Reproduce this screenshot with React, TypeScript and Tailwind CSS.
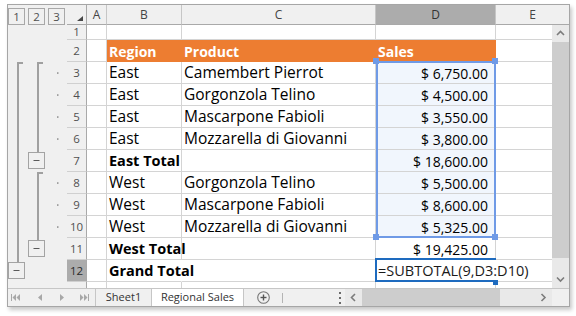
import React from "react";

type R = { n: number; h: string; b?: string; c?: string; d?: string; bold?: boolean };

const rows: R[] = [
  { n: 1, h: "h-[15px]" },
  { n: 2, h: "h-[22px]", b: "Region", c: "Product", d: "Sales" },
  { n: 3, h: "h-[22px]", b: "East", c: "Camembert Pierrot", d: "$ 6,750.00" },
  { n: 4, h: "h-[22px]", b: "East", c: "Gorgonzola Telino", d: "$ 4,500.00" },
  { n: 5, h: "h-[22px]", b: "East", c: "Mascarpone Fabioli", d: "$ 3,550.00" },
  { n: 6, h: "h-[22px]", b: "East", c: "Mozzarella di Giovanni", d: "$ 3,800.00" },
  { n: 7, h: "h-[22px]", b: "East Total", d: "$ 18,600.00", bold: true },
  { n: 8, h: "h-[22px]", b: "West", c: "Gorgonzola Telino", d: "$ 5,500.00" },
  { n: 9, h: "h-[22px]", b: "West", c: "Mascarpone Fabioli", d: "$ 8,600.00" },
  { n: 10, h: "h-[22px]", b: "West", c: "Mozzarella di Giovanni", d: "$ 5,325.00" },
  { n: 11, h: "h-[22px]", b: "West Total", d: "$ 19,425.00", bold: true },
  { n: 12, h: "h-[22px]", b: "Grand Total", bold: true },
  { n: 13, h: "h-[22px]" },
];

function GridRow({ r }: { r: R }) {
  const head = r.n === 2;
  const sel = r.n >= 3 && r.n <= 10;
  const grand = r.n === 12;
  const word = head
    ? "font-bold text-[14px] text-white"
    : r.bold
    ? "font-bold text-[14.5px] text-black"
    : "text-[15.5px] text-black";
  const fill = head ? "bg-[#ed7d31] border-[#ed7d31]" : "border-[#d4d4d4]";
  return (
    <div className={`flex ${r.h}`}>
      <div
        className={`w-[20px] shrink-0 flex items-center justify-center border-r border-b border-r-[#a9a9a9] border-b-[#d0d0d0] text-[11.5px] ${
          grand ? "bg-[#acacac] text-[#2b2b2b]" : "bg-[#f0f0f0] text-[#505050]"
        }`}
      >
        {r.n}
      </div>
      <div className="w-[20px] shrink-0 border-r border-b border-[#d4d4d4]" />
      <div
        className={`w-[75px] shrink-0 border-r border-b flex items-end pl-[2px] whitespace-nowrap ${fill} ${
          grand ? "border-r-transparent" : ""
        } ${word}`}
      >
        <span className="relative top-[1px]">{r.b}</span>
      </div>
      <div className={`w-[194px] shrink-0 border-r border-b flex items-end pl-[2px] whitespace-nowrap ${fill} ${word}`}>
        <span className="relative top-[1px]">{r.c}</span>
      </div>
      <div
        className={`w-[120px] shrink-0 border-r border-b flex items-end whitespace-nowrap ${
          head ? "justify-start pl-[2px]" : "justify-end pr-[7px] text-[14px] text-black"
        } ${fill} ${sel ? "bg-[#f1f6fd]" : ""} ${grand ? "border-r-transparent" : ""} ${head ? word : ""}`}
      >
        <span className="relative top-[1px]">{r.d}</span>
      </div>
      <div className="w-[56px] shrink-0 border-b border-[#d4d4d4]" />
    </div>
  );
}

function Outline() {
  const dots = [47.3, 69.3, 91.3, 113.3, 157.3, 179.3, 201.3];
  return (
    <svg width="59" height="263" viewBox="0 0 59 263">
      <rect x="9" y="37" width="2" height="200" fill="#a0a0a0" />
      <rect x="9" y="37" width="6" height="2" fill="#a0a0a0" />
      <rect x="29" y="37" width="2" height="90" fill="#a0a0a0" />
      <rect x="29" y="37" width="6" height="2" fill="#a0a0a0" />
      <rect x="29" y="147" width="2" height="68" fill="#a0a0a0" />
      <rect x="29" y="147" width="6" height="2" fill="#a0a0a0" />
      {dots.map((y) => (
        <rect key={y} x="49" y={y} width="1.5" height="1.5" fill="#8c8c8c" />
      ))}
      {[
        [20.5, 127.5],
        [20.5, 215.5],
        [0.5, 237.5],
      ].map(([x, y]) => (
        <g key={y}>
          <rect x={x} y={y} width="16" height="16" fill="#f0f0f0" stroke="#a3a3a3" />
          <line x1={x + 5} x2={x + 11} y1={y + 8} y2={y + 8} stroke="#5a5a5a" />
        </g>
      ))}
    </svg>
  );
}

function Chevron({ dir }: { dir: "up" | "down" | "left" | "right" }) {
  const pts = {
    up: "1,5 4.5,1.5 8,5",
    down: "1,1.5 4.5,5 8,1.5",
    left: "5,1 1.5,4.5 5,8",
    right: "1.5,1 5,4.5 1.5,8",
  }[dir];
  const v = dir === "up" || dir === "down";
  return (
    <svg width={v ? 9 : 7} height={v ? 7 : 9} viewBox={v ? "0 0 9 7" : "0 0 7 9"}>
      <polyline points={pts} fill="none" stroke="#7c7c7c" strokeWidth="1.6" />
    </svg>
  );
}

function Nav({ kind }: { kind: "first" | "prev" | "next" | "last" }) {
  const c = "#a8a8a8";
  if (kind === "prev")
    return (
      <svg width="4" height="7" viewBox="0 0 4 7">
        <polygon points="4,0 4,7 0,3.5" fill={c} />
      </svg>
    );
  if (kind === "next")
    return (
      <svg width="4" height="7" viewBox="0 0 4 7">
        <polygon points="0,0 0,7 4,3.5" fill={c} />
      </svg>
    );
  if (kind === "first")
    return (
      <svg width="9" height="7" viewBox="0 0 9 7">
        <rect x="0" y="0" width="1" height="7" fill={c} />
        <polygon points="5,0 5,7 1.5,3.5" fill={c} />
        <polygon points="9,0 9,7 5.5,3.5" fill={c} />
      </svg>
    );
  return (
    <svg width="9" height="7" viewBox="0 0 9 7">
      <polygon points="0,0 0,7 3.5,3.5" fill={c} />
      <polygon points="4,0 4,7 7.5,3.5" fill={c} />
      <rect x="8" y="0" width="1" height="7" fill={c} />
    </svg>
  );
}

export default function App() {
  return (
    <div className="w-[576px] h-[316px] bg-white pl-[7px] pt-[4px] font-['Open_Sans',sans-serif]">
      <div className="w-[563px] h-[303px] border border-[#a6a6a6] flex flex-col bg-white shadow-[2px_3px_4px_rgba(0,0,0,0.22)]">
        {/* column headers */}
        <div className="flex h-[20px] shrink-0 text-[12px] text-[#444]">
          <div className="w-[59px] shrink-0 bg-[#f0f0f0] flex gap-[3px] pt-[3px]">
            {["1", "2", "3"].map((l) => (
              <div
                key={l}
                className="w-[17px] h-[17px] border border-[#a8a8a8] flex items-center justify-center text-[11.5px] text-[#505050]"
              >
                {l}
              </div>
            ))}
          </div>
          <div className="w-[20px] shrink-0 bg-[#f0f0f0] border-r border-b border-r-[#a9a9a9] border-b-[#a9a9a9]">
            <svg width="19" height="19" viewBox="0 0 19 19">
              <polygon points="16,11 16,16 10,16" fill="#474747" />
            </svg>
          </div>
          {[
            ["A", "w-[20px]"],
            ["B", "w-[75px]"],
            ["C", "w-[194px]"],
            ["D", "w-[120px]"],
            ["E", "w-[73px]"],
          ].map(([l, w]) => (
            <div
              key={l}
              className={`${w} shrink-0 flex items-center justify-center border-b border-b-[#a9a9a9] ${
                l === "E" ? "" : "border-r border-r-[#c6c6c6]"
              } ${l === "D" ? "bg-[#acacac] text-[#333]" : "bg-[#f0f0f0]"}`}
            >
              {l}
            </div>
          ))}
        </div>

        {/* body */}
        <div className="flex h-[263px] shrink-0">
          <div className="w-[59px] shrink-0 bg-[#f0f0f0]">
            <Outline />
          </div>
          <div className="relative w-[485px] h-[263px] shrink-0 overflow-hidden">
            {rows.map((r) => (
              <GridRow key={r.n} r={r} />
            ))}
            <div className="absolute left-[309px] top-[36px] w-[120px] h-[177px] border-2 border-[#6f9ae6]">
              <div className="absolute -left-[5px] -top-[5px] w-[6px] h-[6px] bg-[#6f9ae6]" />
              <div className="absolute -right-[4px] -top-[5px] w-[6px] h-[6px] bg-[#6f9ae6]" />
              <div className="absolute -left-[5px] -bottom-[4px] w-[6px] h-[6px] bg-[#6f9ae6]" />
              <div className="absolute -right-[4px] -bottom-[4px] w-[6px] h-[6px] bg-[#6f9ae6]" />
            </div>
            <div className="absolute left-[308px] top-[233px] w-[121px] h-[24px] border-2 border-r-0 border-[#1e6bbf] bg-white flex items-center pl-[1px] whitespace-nowrap text-[14.5px] text-[#1a1a1a]">
              <span className="relative top-[1px]">=SUBTOTAL(9,D3:D10)</span>
              <div className="absolute left-[116px] top-[20px] w-[5px] h-[5px] bg-[#1e6bbf]" />
            </div>
          </div>
          <div className="w-[17px] shrink-0 flex flex-col">
            <div className="h-[17px] bg-[#e9e9e9] flex items-center justify-center">
              <Chevron dir="up" />
            </div>
            <div className="flex-1 bg-[#cdcdcd]" />
            <div className="h-[13px] bg-[#e9e9e9]" />
            <div className="h-[17px] bg-[#e9e9e9] flex items-center justify-center">
              <Chevron dir="down" />
            </div>
          </div>
        </div>

        {/* sheet tabs */}
        <div className="flex h-[18px] shrink-0 border-t border-[#c6c6c6] bg-[#f0f0f0] text-[11px] text-[#333]">
          <div className="w-[88px] shrink-0 flex items-center border-r border-[#c6c6c6] pl-[3px]">
            <Nav kind="first" />
            <div className="ml-[18px]">
              <Nav kind="prev" />
            </div>
            <div className="ml-[18px]">
              <Nav kind="next" />
            </div>
            <div className="ml-[16px]">
              <Nav kind="last" />
            </div>
          </div>
          <div className="w-[56px] shrink-0 flex items-center justify-center border-r border-[#c6c6c6]">Sheet1</div>
          <div className="w-[92px] shrink-0 flex items-center justify-center border-r border-[#c6c6c6] bg-white">
            Regional Sales
          </div>
          <div className="w-[38px] shrink-0 flex items-center justify-center">
            <svg width="13" height="13" viewBox="0 0 13 13">
              <circle cx="6.5" cy="6.5" r="5.8" fill="none" stroke="#777" strokeWidth="1.1" />
              <line x1="3.5" x2="9.5" y1="6.5" y2="6.5" stroke="#555" strokeWidth="1.4" />
              <line x1="6.5" x2="6.5" y1="3.5" y2="9.5" stroke="#555" strokeWidth="1.4" />
            </svg>
          </div>
          <div className="w-px h-[10px] self-center bg-[#b4b4b4]" />
          <div className="flex-1" />
          <div className="w-[10px] shrink-0 flex flex-col items-center justify-center gap-[3px]">
            <div className="w-[2px] h-[2px] bg-[#6a6a6a]" />
            <div className="w-[2px] h-[2px] bg-[#6a6a6a]" />
            <div className="w-[2px] h-[2px] bg-[#6a6a6a]" />
          </div>
          <div className="w-[207px] shrink-0 flex">
            <div className="w-[17px] bg-[#e9e9e9] flex items-center justify-center">
              <Chevron dir="left" />
            </div>
            <div className="w-[138px] bg-[#cdcdcd]" />
            <div className="w-[35px] bg-[#e9e9e9]" />
            <div className="w-[17px] bg-[#e9e9e9] flex items-center justify-center">
              <Chevron dir="right" />
            </div>
          </div>
          <div className="w-[17px] shrink-0 bg-[#f0f0f0]" />
        </div>
      </div>
    </div>
  );
}
